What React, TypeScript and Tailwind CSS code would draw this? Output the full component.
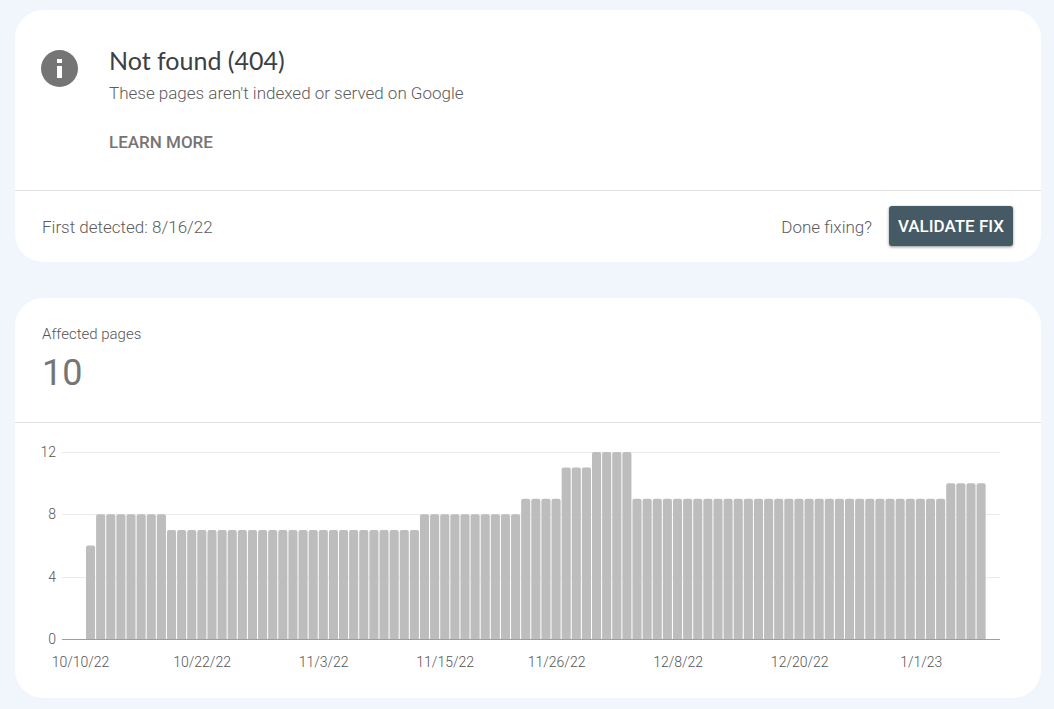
type Point = { count: number; days: number };

const AFFECTED_PAGES: Point[] = [
  { count: 6, days: 1 },
  { count: 8, days: 7 },
  { count: 7, days: 25 },
  { count: 8, days: 10 },
  { count: 9, days: 4 },
  { count: 11, days: 3 },
  { count: 12, days: 4 },
  { count: 9, days: 31 },
  { count: 10, days: 4 },
];

const DATE_TICKS = [
  { day: 0, label: "10/10/22" },
  { day: 12, label: "10/22/22" },
  { day: 24, label: "11/3/22" },
  { day: 36, label: "11/15/22" },
  { day: 47, label: "11/26/22" },
  { day: 59, label: "12/8/22" },
  { day: 71, label: "12/20/22" },
  { day: 83, label: "1/1/23" },
];

const VALUE_TICKS = [0, 4, 8, 12];

const CHART = { left: 47, right: 985, base: 216, height: 187, firstBar: 71, step: 10.12 };

function valueToY(value: number) {
  return CHART.base - (value / 12) * CHART.height;
}

function InfoIcon() {
  return (
    <svg viewBox="0 0 38 38" className="size-[38px] shrink-0" aria-hidden="true">
      <circle cx="18.5" cy="19.5" r="18.5" fill="#757575" />
      <rect x="16" y="10" width="5" height="4" fill="#fff" />
      <rect x="16" y="17" width="5" height="12" fill="#fff" />
    </svg>
  );
}

function PagesChart() {
  const bars = AFFECTED_PAGES.flatMap(({ count, days }) => Array<number>(days).fill(count));

  return (
    <svg
      viewBox="0 0 1026 275"
      className="block h-auto w-full text-[14px] font-light"
      role="img"
      aria-label="Affected pages per day"
    >
      {VALUE_TICKS.map((tick) => {
        const y = Math.round(valueToY(tick));
        return (
          <g key={tick}>
            {tick > 0 && (
              <rect x={CHART.left} y={y} width={CHART.right - CHART.left} height="1" fill="#ebebeb" />
            )}
            <text x="41" y={y + 5} textAnchor="end" fill="#555">
              {tick}
            </text>
          </g>
        );
      })}
      {bars.map((count, i) => {
        const x = CHART.firstBar + i * CHART.step;
        const y = valueToY(count);
        return (
          <path
            key={i}
            d={`M${x} ${CHART.base}V${y + 2}q0-2 2-2h5.1q2 0 2 2V${CHART.base}z`}
            fill="#bdbdbd"
          />
        );
      })}
      <rect x={CHART.left} y={CHART.base} width={CHART.right - CHART.left} height="1" fill="#9e9e9e" />
      {DATE_TICKS.map(({ day, label }) => (
        <text key={label} x={65.5 + day * 10.13} y="244" textAnchor="middle" fill="#555">
          {label}
        </text>
      ))}
    </svg>
  );
}

export default function App() {
  return (
    <main className="flex min-h-screen flex-col gap-9 bg-[#f1f5fc] pt-[10px] pr-[13px] pb-[11px] pl-[15px] font-[Roboto,sans-serif] text-[#757575]">
      <section className="rounded-[28px] bg-white">
        <div className="flex gap-[30px] px-[26px] pt-[39px] pb-9">
          <InfoIcon />
          <div>
            <h1 className="font-[Lato,sans-serif] text-[25px] leading-[22px] text-[#3c4043]">
              Not found (404)
            </h1>
            <p className="mt-[10px] text-[17px] leading-6 font-light text-[#5c5c5c]">
              These pages aren't indexed or served on Google
            </p>
            <a href="#learn-more" className="mt-[25px] block w-fit text-[17px] leading-6 font-medium">
              LEARN MORE
            </a>
          </div>
        </div>
        <div className="flex items-center justify-between border-t border-[#e0e0e0] pt-[15px] pr-7 pb-4 pl-[27px] text-[17px] leading-[26px] font-light text-[#5c5c5c]">
          <p className="pt-[2px]">First detected: 8/16/22</p>
          <div className="flex items-center gap-[17px]">
            <span className="pt-[2px]">Done fixing?</span>
            <button
              type="button"
              className="h-10 rounded-[3px] bg-[#455a64] px-[9px] text-[17px] font-medium text-white shadow-[0_1px_3px_rgba(0,0,0,0.45)]"
            >
              VALIDATE FIX
            </button>
          </div>
        </div>
      </section>

      <section className="rounded-[28px] bg-white">
        <div className="border-b border-[#e0e0e0] px-[27px] pt-[26px] pb-[29px]">
          <h2 className="text-[15px] leading-5 font-light text-[#555]">Affected pages</h2>
          <p className="mt-[9px] text-[36px] leading-10">10</p>
        </div>
        <PagesChart />
      </section>
    </main>
  );
}
